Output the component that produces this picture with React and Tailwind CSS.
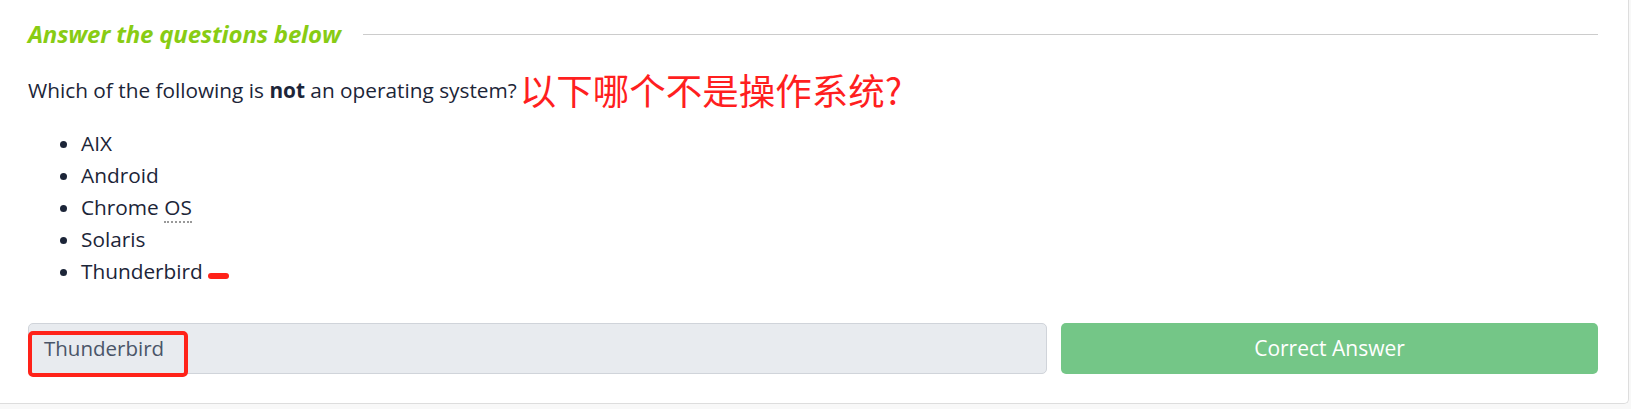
export default function App() {
  const items = ['AIX', 'Android', 'Chrome OS', 'Solaris', 'Thunderbird'];

  return (
    <div className="min-h-[409px] bg-[#f8f8f8] font-['Open_Sans',sans-serif] text-[#1c2538]">
      <div className="w-[1629px] bg-white border-r border-b border-[#dddddd] rounded-br-[5px] pl-[28px] pr-[30px] pt-[19px] pb-[29px]">
        {/* heading */}
        <div className="flex items-center gap-[22px] h-[30px]">
          <h5 className="text-[24px] font-bold italic tracking-[-0.2px] text-[#88cc14] leading-[30px] whitespace-nowrap">
            Answer the questions below
          </h5>
          <div className="flex-1 h-px bg-[#cccccc]" />
        </div>

        {/* question */}
        <div className="flex items-center mt-[26px] h-[30px]">
          <p className="text-[20.8px] leading-[27px]">
            Which of the following is <b className="font-bold">not</b> an operating system?
          </p>
          <span className="ml-[3px] text-[36.5px] leading-none text-[#ff1f1f] font-['Noto_Sans_CJK_SC',sans-serif]">
            以下哪个不是操作系统?
          </span>
        </div>

        {/* options */}
        <ul className="list-disc pl-[53px] mt-[22px] text-[20.8px] leading-[32px]">
          {items.map(item => (
            <li key={item}>
              {item === 'Chrome OS' ? (
                <>Chrome <abbr className="no-underline border-b-2 border-dotted border-[#999999]">OS</abbr></>
              ) : item === 'Thunderbird' ? (
                <span className="inline-flex items-end">
                  Thunderbird
                  <span className="ml-[5px] mb-[8px] w-[21px] h-[6px] rounded-full bg-[#ff2219]" />
                </span>
              ) : item}
            </li>
          ))}
        </ul>

        {/* answer row */}
        <div className="flex gap-[14px] mt-[36px]">
          <div className="relative flex-1 h-[51px] bg-[#e8ebef] border border-[#d0d4da] rounded-[5px] flex items-center px-[15px]">
            <span className="text-[20.5px] text-[#4a5568]">Thunderbird</span>
            <div className="absolute left-[-1px] top-[7px] w-[160px] h-[46px] border-[4px] border-[#ff2219] rounded-[5px]" />
          </div>
          <button className="w-[537px] h-[51px] bg-[#74c687] rounded-[5px] text-white text-[21px] font-medium">
            Correct Answer
          </button>
        </div>
      </div>
    </div>
  );
}
